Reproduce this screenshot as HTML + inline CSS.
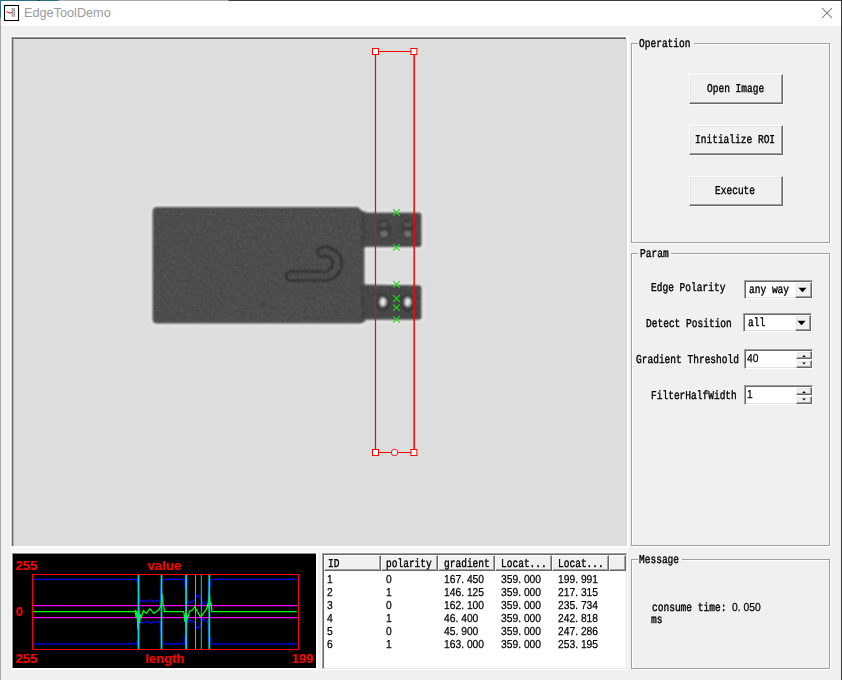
<!DOCTYPE html>
<html><head><meta charset="utf-8"><title>EdgeToolDemo</title>
<style>
html,body{margin:0;padding:0;}
body{width:842px;height:680px;overflow:hidden;background:#f0f0f0;position:relative;font-family:"Liberation Mono",monospace;}
#w{position:absolute;left:0;top:0;width:842px;height:680px;overflow:hidden;background:#f0f0f0;}
#w div,#w span,#w svg{position:absolute;}
.s{font:12px/12px "Liberation Mono",monospace;color:#000;white-space:pre;display:block;transform:scaleX(.7944);transform-origin:0 0;height:12px;margin-top:-.5px;text-rendering:geometricPrecision;-webkit-text-stroke:.4px #000;}
.n{font:11.5px/12px "Liberation Sans",sans-serif;color:#000;white-space:pre;display:block;height:12px;margin-top:.2px;text-rendering:geometricPrecision;-webkit-text-stroke:.25px #000;transform:scaleX(.895);transform-origin:0 0;}
.n i{display:inline-block;position:static;width:6.39px;font-style:normal;}
.grp{border:1px solid #a0a0a0;box-shadow:1px 1px 0 #fff, inset 1px 1px 0 #fff;}
.gl{background:#f0f0f0;height:12px;}
.btn{background:#f0f0f0;box-sizing:border-box;border:1px solid;border-color:#fff #696969 #696969 #fff;box-shadow:inset -1px -1px 0 #a0a0a0, inset 1px 1px 0 #e6e6e6, 1px 1px 0 #fbfbfb;}
.edit{background:#fff;box-sizing:border-box;border:1px solid;border-color:#a0a0a0 #fff #fff #a0a0a0;box-shadow:inset 1px 1px 0 #696969, inset -1px -1px 0 #e3e3e3;}
.hc{top:555px;height:16px;background:#f0f0f0;box-sizing:border-box;border:1px solid;border-color:#fff #696969 #696969 #fff;box-shadow:inset -1px -1px 0 #a0a0a0;}
.lab{font:bold 13px/13px "Liberation Sans",sans-serif;fill:#f00;}
</style></head><body>
<div id="w">
<!-- window frame -->
<div style="left:0;top:0;width:842px;height:26px;background:#fff"></div>
<div style="left:0;top:0;width:842px;height:1px;background:linear-gradient(90deg,#2e6f88 0,#2e6f88 37px,#23414d 38px,#23414d 40px,#2e6f88 41px,#2e6f88 58px,#a9adaf 59px,#a9adaf 228px,#3b3d40 229px,#3b3d40 100%)"></div>
<div style="left:0;top:0;width:1px;height:680px;background:linear-gradient(180deg,#2f6e86 0,#2f6e86 17px,#a8a8a8 19px,#a8a8a8 100%)"></div>
<div style="left:841px;top:0;width:1px;height:680px;background:#3a3a3a"></div>
<!-- title icon -->
<svg style="left:0;top:0" width="40" height="26" viewBox="0 0 40 26">
<rect x="4.5" y="5.5" width="14" height="15" fill="#fff" stroke="#000" stroke-width="1.1"/>
<rect x="11.5" y="8" width="3.6" height="8.8" fill="#a9a9a9"/>
<rect x="12.9" y="8" width=".8" height="8.8" fill="#c8c8c8"/>
<path d="M6.4 12.2 L8 12 L9.5 13.3 L10.6 12.6 L12 12.3" fill="none" stroke="#f00" stroke-width="1"/>
</svg>
<span id="ttl" style="left:24px;top:5px;font:12.7px/16px 'Liberation Sans',sans-serif;color:#9a9a9a;white-space:pre">EdgeToolDemo</span>
<svg style="left:818px;top:4px" width="18" height="18" viewBox="818 4 18 18"><path d="M822 8L832 18M832 8L822 18" stroke="#6e6e6e" stroke-width="1.05" fill="none"/></svg>

<!-- image panel -->
<div style="left:10px;top:36px;width:619px;height:512px;background:#fff"></div>
<div style="left:11px;top:548px;width:617px;height:5px;background:#f7f7f7"></div>
<div style="left:11px;top:37px;width:615px;height:509px;background:#929292"></div>
<div style="left:11px;top:38px;width:1px;height:508px;background:#d2d2d2"></div>
<div style="left:12px;top:38px;width:614px;height:508px;background:#666"></div>
<div style="left:13px;top:39px;width:613px;height:507px;background:#b4b4b4"></div>
<div style="left:14px;top:39px;width:612.6px;height:507px;background:#dddddd"></div>
<svg style="left:13px;top:39px" width="613" height="507" viewBox="13 39 613 507">
<defs><filter id="bl" x="-5%" y="-5%" width="110%" height="110%"><feGaussianBlur stdDeviation="1.0"/></filter>
<filter id="nz" x="0" y="0" width="100%" height="100%" color-interpolation-filters="sRGB"><feTurbulence type="fractalNoise" baseFrequency="0.3" numOctaves="2" seed="7" result="t"/><feColorMatrix in="t" type="matrix" values="1.5 0 0 0 -0.45  1.5 0 0 0 -0.45  1.5 0 0 0 -0.45  0 0 0 0 1"/><feGaussianBlur stdDeviation="0.6"/></filter>
<clipPath id="pclip"><path d="M157 208H358L364 213.7H419Q420.3 213.7 420.3 215.7V244Q420.3 246 419 246H363.5V285.5L419 286.5Q420.3 286.5 420.3 288.5V316.5Q420.3 318.5 419 318.5H363V320Q363 322.5 360 322.5H157Q153.5 322.5 153.5 319V211.5Q153.5 208 157 208Z"/></clipPath>
<filter id="bl3" x="-50%" y="-50%" width="200%" height="200%"><feGaussianBlur stdDeviation="1.5"/></filter>
<filter id="bl2" x="-5%" y="-5%" width="110%" height="110%"><feGaussianBlur stdDeviation="1.6"/></filter></defs>
<g filter="url(#bl2)" fill="#ebebeb" stroke="#ebebeb" stroke-width="5">
<path d="M157 207H358L364 212.7H419Q421.3 212.7 421.3 214.7V245Q421.3 247 419 247H364.5V284.5L419 285.5Q421.3 285.5 421.3 287.5V317.5Q421.3 319.5 419 319.5H364V320Q364 323.5 360 323.5H157Q152.5 323.5 152.5 319V211.5Q152.5 207 157 207Z"/>
</g>
<g filter="url(#bl)">
<path id="prt" d="M157 207H358L364 212.7H419Q421.3 212.7 421.3 214.7V245Q421.3 247 419 247H364.5V284.5L419 285.5Q421.3 285.5 421.3 287.5V317.5Q421.3 319.5 419 319.5H364V320Q364 323.5 360 323.5H157Q152.5 323.5 152.5 319V211.5Q152.5 207 157 207Z" fill="#4d4d4d"/>
<path d="M366 212.7H419Q421.3 212.7 421.3 214.7V245Q421.3 247 419 247H366Z" fill="#494949"/>
<path d="M366 285L419 285.5Q421.3 285.5 421.3 287.5V317.5Q421.3 319.5 419 319.5H366Z" fill="#464646"/>
<path d="M361 211H365.5V247H361ZM361 284.5H365.5V322H361Z" fill="#3f3f3f" opacity=".7"/>
<path d="M290.5 276H325A12.3 12.3 0 0 0 325 251.4Q323 251.4 322 252.4" fill="none" stroke="#262626" stroke-width="11.2" stroke-linecap="round"/>
<path d="M290.5 276H325A12.3 12.3 0 0 0 325 251.4Q323 251.4 322 252.4" fill="none" stroke="#4e4e4e" stroke-width="6.8" stroke-linecap="round"/>
<circle cx="263" cy="305" r="1.8" fill="#383838"/>
<ellipse cx="384" cy="229.5" rx="7" ry="10" fill="#3c3c3c"/><ellipse cx="407.8" cy="229.5" rx="7" ry="10" fill="#3c3c3c"/>
<ellipse cx="384" cy="234" rx="3.8" ry="3" fill="#747474"/><ellipse cx="407.8" cy="234" rx="3.8" ry="3" fill="#747474"/>
<ellipse cx="384" cy="224.5" rx="3.6" ry="2" fill="#5c5c5c"/><ellipse cx="407.8" cy="224.5" rx="3.6" ry="2" fill="#5c5c5c"/>
<ellipse cx="383" cy="302.5" rx="7" ry="9" fill="#363636"/><ellipse cx="407.7" cy="302.5" rx="7" ry="9" fill="#363636"/>
</g>
<g filter="url(#bl3)"><ellipse cx="383" cy="302" rx="3.5" ry="4.8" fill="#f6f6f6"/><ellipse cx="407.7" cy="302" rx="3.5" ry="4.8" fill="#f6f6f6"/></g>
<rect x="150" y="204" width="274" height="122" filter="url(#nz)" clip-path="url(#pclip)" opacity=".05"/>
<!-- ROI -->
<g fill="#f00">
<rect x="374.9" y="51" width="1.2" height="402"/><rect x="413.4" y="51" width="1.5" height="402"/>
<rect x="375" y="51" width="39" height="1"/><rect x="375" y="452" width="39" height="1"/>
</g>
<g fill="#fff" stroke="#f00" stroke-width="1">
<rect x="372.5" y="48.5" width="6" height="6"/><rect x="410.9" y="48.5" width="6" height="6"/>
<rect x="372.5" y="449.5" width="6" height="6"/><rect x="410.9" y="449.5" width="6" height="6"/>
<circle cx="394.5" cy="452.5" r="3.2"/>
</g>
<g stroke="#08ea08" stroke-width="1.1" fill="none"><path d="M393.2 209.2L399.8 215.8M399.8 209.2L393.2 215.8"/><path d="M393.2 244.1L399.8 250.7M399.8 244.1L393.2 250.7"/><path d="M393.2 281.1L399.8 287.7M399.8 281.1L393.2 287.7"/><path d="M393.2 295.2L399.8 301.8M399.8 295.2L393.2 301.8"/><path d="M393.2 304.3L399.8 310.9M399.8 304.3L393.2 310.9"/><path d="M393.2 316.1L399.8 322.7M399.8 316.1L393.2 322.7"/></g>
</svg>

<!-- plot -->
<div style="left:11px;top:552px;width:307px;height:118px;background:#fff"></div>
<div style="left:12px;top:553px;width:304px;height:115px;background:#8a8a8a"></div>
<div style="left:12.7px;top:554.4px;width:303px;height:113.2px;background:#000"></div>
<svg style="left:13px;top:554px" width="304" height="114" viewBox="13 554 304 114">
<defs><clipPath id="pc"><rect x="33" y="575" width="264.5" height="74"/></clipPath></defs>
<rect x="32.5" y="574.5" width="266" height="75" fill="none" stroke="#f00" stroke-width="1"/>
<g clip-path="url(#pc)" fill="none" stroke-width="1.25">
<polyline points="32.6,579.3 136.9,579.3 137.6,584.9 138.3,579.3 138.8,594.8 139.9,600.7 141.8,601.4 144.5,600.5 146.5,602.1 148.5,601.0 151.1,599.7 153.8,601.8 156.4,600.7 159.4,601.4 160.4,599.4 161.3,584.9 162.1,581.5 163.7,579.3 184.6,579.3 185.1,587.5 186.2,579.3 186.8,600.1 188.8,602.7 192.1,602.1 194.8,600.1 196.8,594.8 199.4,596.1 201.4,600.1 202.7,604.0 205.4,602.7 207.4,602.1 208.4,596.8 209.5,582.2 210.3,586.2 211.3,579.3 296.7,579.3" stroke="#0000ff"/>
<polyline points="32.6,643.9 136.9,643.9 137.6,638.3 138.3,643.9 138.8,628.4 139.9,622.4 141.8,621.8 144.5,622.7 146.5,621.1 148.5,622.2 151.1,623.5 153.8,621.4 156.4,622.4 159.4,621.8 160.4,623.8 161.3,638.3 162.1,641.6 163.7,643.9 184.6,643.9 185.1,635.7 186.2,643.9 186.8,623.1 188.8,620.5 192.1,621.1 194.8,623.1 196.8,628.4 199.4,627.1 201.4,623.1 202.7,619.1 205.4,620.5 207.4,621.1 208.4,626.4 209.5,641.0 210.3,637.0 211.3,643.9 296.7,643.9" stroke="#0000ff"/>
<path d="M33 605.5H297.5M33 617.5H297.5" stroke="#ff00ff"/>
<polyline points="32.6,611.6 134.3,611.6 135.2,610.7 136.1,617.3 136.9,610.7 138.0,629.9 138.8,608.7 139.6,623.2 140.5,615.3 141.4,616.9 143.2,610.7 146.5,613.4 149.8,608.7 153.8,613.4 158.4,610.0 160.4,607.1 161.3,603.4 162.1,593.5 162.9,603.4 163.7,606.0 164.5,611.6 183.3,611.6 184.1,613.3 184.9,621.9 185.7,612.7 186.2,630.1 187.0,615.3 187.8,617.9 189.5,611.3 192.1,610.3 194.8,606.7 197.4,611.6 200.1,616.4 202.1,615.3 204.7,611.3 206.7,608.7 207.6,604.7 208.4,607.4 209.3,592.8 210.3,604.7 211.1,603.4 212.0,611.6 296.7,611.6" stroke="#00ff00"/>
<g fill="#00d8d8" stroke="none">
<rect x="137.6" y="575" width="1.8" height="74"/><rect x="160.6" y="575" width="1.8" height="74"/>
<rect x="185.2" y="575" width="1.8" height="74"/><rect x="195" y="575" width="1" height="74"/>
<rect x="200.8" y="575" width="1" height="74"/><rect x="208.4" y="575" width="1.8" height="74"/>
</g></g>
<text class="lab" x="15.5" y="570">255</text>
<text class="lab" x="15.5" y="663">255</text>
<text class="lab" x="15.5" y="616">0</text>
<text class="lab" x="291.5" y="663">199</text>
<text class="lab" x="164.2" y="570" text-anchor="middle" textLength="34" lengthAdjust="spacingAndGlyphs">value</text>
<text class="lab" x="164.7" y="663" text-anchor="middle">length</text>
</svg>

<!-- list view -->
<div style="left:321px;top:552px;width:307px;height:118px;background:#fff"></div>
<div style="left:322px;top:553px;width:305px;height:116px;background:#a0a0a0"></div>
<div style="left:323px;top:554px;width:305px;height:116px;background:#fff"></div>
<div style="left:323px;top:554px;width:303px;height:114px;background:#696969"></div>
<div style="left:324px;top:555px;width:303px;height:114px;background:#e6e6e6"></div>
<div style="left:324px;top:555px;width:302px;height:113px;background:#fff"></div>
<div class="hc" style="left:324px;width:57px"></div><span class="s" style="left:328.3px;top:558px">ID</span><div class="hc" style="left:381px;width:57px"></div><span class="s" style="left:385.8px;top:558px">polarity</span><div class="hc" style="left:438px;width:57px"></div><span class="s" style="left:444.3px;top:558px">gradient</span><div class="hc" style="left:495px;width:57px"></div><span class="s" style="left:501.3px;top:558px">Locat...</span><div class="hc" style="left:552px;width:57px"></div><span class="s" style="left:558.3px;top:558px">Locat...</span><div class="hc" style="left:609px;width:17px"></div>
<span class="n" style="left:326.8px;top:574px">1</span><span class="n" style="left:385.8px;top:574px">0</span><span class="n" style="left:444.0px;top:574px">167<i>.</i>450</span><span class="n" style="left:501.0px;top:574px">359<i>.</i>000</span><span class="n" style="left:558.4px;top:574px">199<i>.</i>991</span>
<span class="n" style="left:326.8px;top:587px">2</span><span class="n" style="left:385.8px;top:587px">1</span><span class="n" style="left:444.0px;top:587px">146<i>.</i>125</span><span class="n" style="left:501.0px;top:587px">359<i>.</i>000</span><span class="n" style="left:558.4px;top:587px">217<i>.</i>315</span>
<span class="n" style="left:326.8px;top:600px">3</span><span class="n" style="left:385.8px;top:600px">0</span><span class="n" style="left:444.0px;top:600px">162<i>.</i>100</span><span class="n" style="left:501.0px;top:600px">359<i>.</i>000</span><span class="n" style="left:558.4px;top:600px">235<i>.</i>734</span>
<span class="n" style="left:326.8px;top:613px">4</span><span class="n" style="left:385.8px;top:613px">1</span><span class="n" style="left:444.0px;top:613px">46<i>.</i>400</span><span class="n" style="left:501.0px;top:613px">359<i>.</i>000</span><span class="n" style="left:558.4px;top:613px">242<i>.</i>818</span>
<span class="n" style="left:326.8px;top:626px">5</span><span class="n" style="left:385.8px;top:626px">0</span><span class="n" style="left:444.0px;top:626px">45<i>.</i>900</span><span class="n" style="left:501.0px;top:626px">359<i>.</i>000</span><span class="n" style="left:558.4px;top:626px">247<i>.</i>286</span>
<span class="n" style="left:326.8px;top:639px">6</span><span class="n" style="left:385.8px;top:639px">1</span><span class="n" style="left:444.0px;top:639px">163<i>.</i>000</span><span class="n" style="left:501.0px;top:639px">359<i>.</i>000</span><span class="n" style="left:558.4px;top:639px">253<i>.</i>195</span>


<!-- group boxes -->
<div class="grp" style="left:631px;top:43px;width:197px;height:198px"></div>
<div class="gl" style="left:638px;top:37px;width:56px"></div><span class="s" style="left:639.3px;top:38px">Operation</span>
<div class="grp" style="left:631px;top:253px;width:197px;height:291px"></div>
<div class="gl" style="left:638px;top:247px;width:33px"></div><span class="s" style="left:640px;top:248px">Param</span>
<div class="grp" style="left:631px;top:559px;width:197px;height:108px"></div>
<div class="gl" style="left:638px;top:553px;width:44px"></div><span class="s" style="left:638.8px;top:554px">Message</span>

<!-- buttons -->
<div class="btn" style="left:689px;top:74px;width:94px;height:30px"></div><span class="s" style="left:706.6px;top:83px">Open Image</span>
<div class="btn" style="left:689px;top:125px;width:94px;height:30px"></div><span class="s" style="left:694.6px;top:134px">Initialize ROI</span>
<div class="btn" style="left:689px;top:176px;width:94px;height:30px"></div><span class="s" style="left:714.9px;top:185px">Execute</span>

<!-- params -->
<span class="s" style="left:651px;top:282px">Edge Polarity</span>
<span class="s" style="left:646px;top:318px">Detect Position</span>
<span class="s" style="left:636.4px;top:354px">Gradient Threshold</span>
<span class="s" style="left:650.7px;top:390px">FilterHalfWidth</span>

<div class="edit" style="left:744px;top:280px;width:68.6px;height:19.2px"></div>
<div class="btn" style="left:795.4px;top:282px;width:16.2px;height:15.7px"></div>
<svg style="left:798px;top:287px" width="9" height="6" viewBox="0 0 9 6"><path d="M.4 .8H8.6L4.5 5.2Z" fill="#000"/></svg>
<span class="s" style="left:748.5px;top:284.7px">any way</span>

<div class="edit" style="left:743.3px;top:313.2px;width:68.6px;height:19px"></div>
<div class="btn" style="left:794.6px;top:315.2px;width:16.2px;height:15.5px"></div>
<svg style="left:797.2px;top:320.2px" width="9" height="6" viewBox="0 0 9 6"><path d="M.4 .8H8.6L4.5 5.2Z" fill="#000"/></svg>
<span class="s" style="left:747.6px;top:317.6px">all</span>

<div class="edit" style="left:744px;top:349.2px;width:68.6px;height:20.2px"></div>
<div class="btn" style="left:796px;top:350.7px;width:15.6px;height:8.6px"></div>
<div class="btn" style="left:796px;top:359.5px;width:15.6px;height:8.7px"></div>
<svg style="left:800.4px;top:353px" width="8" height="14" viewBox="0 0 8 14"><path d="M2.2 4H5.8L4 2ZM2.2 9.6H5.8L4 11.6Z" fill="#000"/></svg>
<span class="n" style="left:747.3px;top:353px">40</span>

<div class="edit" style="left:744px;top:385.2px;width:68.6px;height:20.2px"></div>
<div class="btn" style="left:796px;top:386.7px;width:15.6px;height:8.6px"></div>
<div class="btn" style="left:796px;top:395.5px;width:15.6px;height:8.7px"></div>
<svg style="left:800.4px;top:389px" width="8" height="14" viewBox="0 0 8 14"><path d="M2.2 4H5.8L4 2ZM2.2 9.6H5.8L4 11.6Z" fill="#000"/></svg>
<span class="n" style="left:747.3px;top:389px">1</span>

<!-- message -->
<span class="s" style="left:651.6px;top:602px">consume time: </span><span class="n" style="left:731.7px;top:602px">0<i>.</i>050</span>
<span class="s" style="left:651px;top:614.5px">ms</span>
</div>
</body></html>
